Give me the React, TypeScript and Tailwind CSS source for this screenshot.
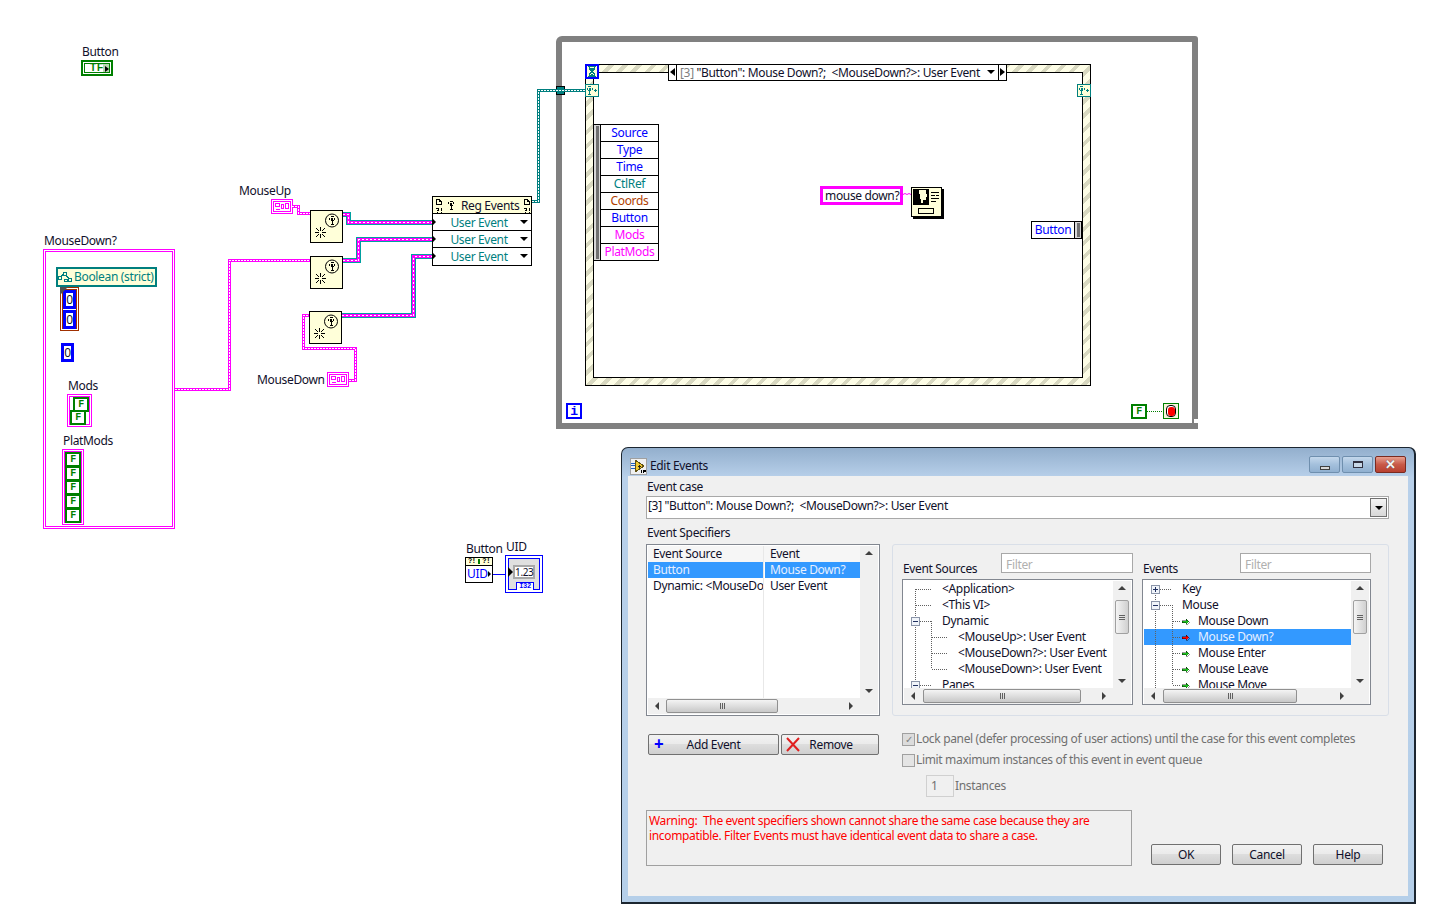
import React from "react";

const pos = (x: number, y: number, w?: number, h?: number): React.CSSProperties => ({ left: x, top: y, width: w, height: h });

function Lbl({ x, y, children }: { x: number; y: number; children: React.ReactNode }) {
  return <div className="absolute whitespace-nowrap leading-4 text-[#10102a]" style={pos(x, y)}>{children}</div>;
}

function FConst({ x, y }: { x: number; y: number }) {
  return (
    <div className="absolute flex items-center justify-center border-[2px] border-[#007f00] bg-white font-['Liberation_Mono'] text-[10px] font-bold leading-none text-[#007f00]" style={pos(x, y, 16, 15)}>F</div>
  );
}

function Num({ x, y, w, h }: { x: number; y: number; w: number; h: number }) {
  return <div className="absolute flex items-center justify-center border-[3px] border-[#0000ff] bg-white leading-none text-[#10102a]" style={pos(x, y, w, h)}>0</div>;
}

function Antenna({ x, y, c = "#000" }: { x: number; y: number; c?: string }) {
  return (
    <g transform={`translate(${x} ${y})`} fill="none" stroke={c} shapeRendering="crispEdges">
      <path d="M1.5 0.5h3M0.5 1.5v2M5.5 1.5v2M1.5 4.5h3M2.5 2.5h1v1h-1zM3 5v3M1.5 8.5h3" />
    </g>
  );
}

function RegNode({ x, y }: { x: number; y: number }) {
  return (
    <div className="absolute border border-black bg-[#ffffd9]" style={pos(x, y, 33, 33)}>
      <svg width="31" height="31" viewBox="0 0 31 31" className="block">
        <circle cx="21" cy="9.5" r="6.5" fill="none" stroke="#000" />
        <Antenna x={18} y={5} />
        <path d="M9.500 16v4M9.500 23v4M4 21.500h4M11 21.500h4M5 17l3 3M14 17l-3 3M5 26l3-3M14 26l-3-3" stroke="#000" fill="none" strokeWidth="1" shapeRendering="crispEdges" />
      </svg>
    </div>
  );
}

function Refnum({ x, y }: { x: number; y: number }) {
  return (
    <div className="absolute flex items-center justify-center border-[3px] border-double border-[#ff00ff] bg-white" style={pos(x, y, 22, 15)}>
      <svg width="14" height="7" viewBox="0 0 14 7" fill="none" stroke="#ff00ff" shapeRendering="crispEdges">
        <path d="M0.5 0.5h4v3h-4zM0.5 6.5h4M6.5 1.5h2v4h-2zM10.5 0.5h3v5h-3z" />
      </svg>
    </div>
  );
}

function DocMark({ x, y }: { x: number; y: number }) {
  return (
    <svg className="absolute" style={pos(x, y, 8, 15)} viewBox="0 0 8 15" fill="none" stroke="#000" shapeRendering="crispEdges">
      <path d="M1.5 1.5h3l2 2v3h-5zM4.5 1.5v2h2" />
      <path d="M0.5 10.5h3v2h-2M1.5 14.5h1M6.5 9.5v3M6.5 14v1" />
    </svg>
  );
}

function RegEvents() {
  return (
    <div className="absolute border border-black bg-white" style={pos(432, 196, 100, 70)}>
      <div className="relative h-[17px] border-b border-black bg-[#ffffd9]">
        <DocMark x={2} y={1} />
        <svg className="absolute" style={pos(14, 3, 8, 10)} viewBox="0 0 8 10"><Antenna x={1} y={0.5} /></svg>
        <div className="absolute left-[28px] top-0 leading-[17px] text-[#10102a]">Reg Events</div>
        <DocMark x={90} y={1} />
      </div>
      {[0, 1, 2].map((i) => (
        <div key={i} className="relative h-[17px] border-b border-black text-center leading-[18px] text-[#007f7f] last:border-b-0">
          <span className="absolute left-0 top-[5px] h-0 w-0 border-y-[3px] border-l-[3px] border-y-transparent border-l-black" />
          <span className="pr-[6px]">User Event</span>
          <span className="absolute right-[3px] top-[6px] h-0 w-0 border-x-[4px] border-t-[4px] border-x-transparent border-t-black" />
        </div>
      ))}
    </div>
  );
}

function Wires() {
  const ue = [
    "M342.5 214.5H348.5V222.5H432",
    "M342.5 260.5H358.5V239.5H432",
    "M341.5 315.5H413.5V256.5H432",
  ];
  const mg = [
    "M292 206.5H298.5V213.5H310",
    "M175 389.5H229.5V260.5H310",
    "M349 380.5H355.5V348.5H303.5V315.5H309",
  ];
  return (
    <svg className="absolute left-0 top-0" width="1442" height="916" fill="none" shapeRendering="crispEdges">
      {ue.map((d) => (
        <g key={d}>
          <path d={d} stroke="#00a0a0" strokeWidth="5" />
          <path d={d} stroke="#ff00ff" strokeWidth="3" />
          <path d={d} stroke="#fff" strokeWidth="1" strokeDasharray="2 2" />
        </g>
      ))}
      {mg.map((d) => (
        <g key={d}>
          <path d={d} stroke="#ff00ff" strokeWidth="3" />
          <path d={d} stroke="#fff" strokeWidth="1" strokeDasharray="2 1" />
        </g>
      ))}
      <path d="M532 201.5H538.5V90.5H585" stroke="#007f7f" strokeWidth="3" />
      <path d="M532 201.5H538.5V90.5H585" stroke="#fff" strokeWidth="1" strokeDasharray="2 1" />
      <path d="M493 574.5H506" stroke="#0000ff" strokeWidth="1" />
      <path d="M1147 411.5H1163" stroke="#007f00" strokeWidth="1" strokeDasharray="1 1" />
      <path d="M903 194.5l2 -1l2 1l2 -1l2 1" stroke="#ff00ff" strokeWidth="1" shapeRendering="auto" />
    </svg>
  );
}

function EvTerminal({ x, y }: { x: number; y: number }) {
  return (
    <div className="absolute border border-[#007f7f] bg-[#ffffd9]" style={pos(x, y, 14, 13)}>
      <svg width="12" height="11" viewBox="0 0 12 11" className="block" fill="none">
        <Antenna x={0.5} y={1} c="#007f7f" />
        <path d="M8 5.5h3M9.5 4v3" stroke="#007f7f" shapeRendering="crispEdges" />
      </svg>
    </div>
  );
}

function EventStructure() {
  const rows: [string, string][] = [
    ["Source", "text-[#0000ff]"],
    ["Type", "text-[#0000ff]"],
    ["Time", "text-[#0000ff]"],
    ["CtlRef", "text-[#007f7f]"],
    ["Coords", "text-[#b04000]"],
    ["Button", "text-[#0000ff]"],
    ["Mods", "text-[#ff00ff]"],
    ["PlatMods", "text-[#ff00ff]"],
  ];
  return (
    <>
      <div className="absolute rounded-tl-[6px] rounded-tr-[3px] border-[6px] border-[#808080] bg-white" style={pos(556, 36, 642, 393)} />
      <div className="absolute bg-white" style={pos(1194, 419, 4, 4)} />
      <div className="absolute border border-black bg-[repeating-linear-gradient(135deg,#fdfde6_0,#fdfde6_6px,#d8d8c0_6px,#d8d8c0_10px)]" style={pos(585, 64, 506, 322)}>
        <div className="absolute inset-[7px] border border-black bg-white" />
      </div>
      <div className="absolute bg-[#007f7f] border border-black" style={pos(556, 86, 9, 9)} />
      <div className="absolute flex items-center justify-center border-[2px] border-[#0000ff] bg-[#ffffd9]" style={pos(585, 64, 14, 15)}>
        <svg width="10" height="11" viewBox="0 0 10 11" fill="none" stroke="#007f7f" shapeRendering="crispEdges">
          <path d="M1 0.5h8M1 10.5h8M2.5 1v2l2 2v1l-2 2v2M7.5 1v2l-2 2v1l2 2v2" />
          <path d="M3 2h4M4 3h2M4 8h2M3 9h4" />
        </svg>
      </div>
      <EvTerminal x={585} y={84} />
      <EvTerminal x={1077} y={84} />

      <div className="absolute flex border border-black bg-white" style={pos(668, 64, 339, 17)}>
        <div className="relative w-[8px] shrink-0 border-r border-black">
          <span className="absolute left-[1px] top-[3px] h-0 w-0 border-y-[4px] border-r-[5px] border-y-transparent border-r-black" />
        </div>
        <div className="relative flex-1 whitespace-nowrap pl-[3px] leading-[15px] text-[#10102a]">
          <span className="text-[#808080]">[3]</span> "Button": Mouse Down?;&nbsp; &lt;MouseDown?&gt;: User Event
          <span className="absolute right-[3px] top-[5px] h-0 w-0 border-x-[4px] border-t-[4px] border-x-transparent border-t-black" />
        </div>
        <div className="relative w-[8px] shrink-0 border-l border-black">
          <span className="absolute left-[1px] top-[3px] h-0 w-0 border-y-[4px] border-l-[5px] border-y-transparent border-l-black" />
        </div>
      </div>

      <div className="absolute flex border border-black bg-white" style={pos(593, 124, 66, 137)}>
        <div className="w-[7px] shrink-0 border-r border-black bg-[#d8d8d8] px-[2px] py-[1px]"><div className="h-full w-[3px] bg-[#707070]" /></div>
        <div className="flex-1">
          {rows.map(([t, c]) => (
            <div key={t} className={`h-[17px] border-b border-black text-center leading-[16px] last:border-b-0 ${c}`}>{t}</div>
          ))}
        </div>
      </div>

      <div className="absolute flex border border-black bg-white" style={pos(1031, 221, 51, 18)}>
        <div className="flex-1 text-center leading-[16px] text-[#0000ff]">Button</div>
        <div className="w-[7px] shrink-0 border-l border-black bg-[#d8d8d8] px-[2px] py-[1px]"><div className="h-full w-[3px] bg-[#707070]" /></div>
      </div>

      <div className="absolute whitespace-nowrap border-[3px] border-[#ff00ff] bg-white px-[2px] leading-[13px] text-[#10102a]" style={pos(820, 186, 83, 19)}>mouse down?</div>

      <div className="absolute border border-black bg-[#ffffd9] shadow-[2px_2px_0_#000]" style={pos(911, 187, 31, 30)}>
        <svg width="29" height="28" viewBox="0 0 29 28" className="block" fill="none" shapeRendering="crispEdges">
          <rect x="1" y="1" width="16" height="16" fill="#000" />
          <path d="M7 2h7v4h1v3h-1v3h-3v3h-2v-3l-1-2z" fill="#ffffd9" />
          <path d="M3 3h2v7h2l-3 4-3-4h2z" fill="#000" />
          <path d="M19 4.5h8M19 7.5h4M24 7.5h3M19 10.5h8M19 13.5h5" stroke="#000" />
          <rect x="6.5" y="20.5" width="15" height="5" stroke="#000" />
        </svg>
      </div>

      <div className="absolute flex items-center justify-center border-[2px] border-[#0000ff] bg-white font-['Liberation_Mono'] text-[13px] font-bold leading-none text-[#0000ff]" style={pos(566, 403, 16, 16)}>i</div>
      <FConst x={1131} y={404} />
      <div className="absolute flex items-center justify-center border border-[#007f00] bg-[#f6f6dc]" style={pos(1163, 403, 16, 16)}>
        <div className="flex h-[12px] w-[10px] items-center justify-center rounded-[4px] border border-black bg-white">
          <div className="h-[9px] w-[7px] rounded-[3px] bg-[#ff0000]" />
        </div>
      </div>
    </>
  );
}

function Diagram() {
  return (
    <>
      <Lbl x={82} y={44}>Button</Lbl>
      <div className="absolute border-[2px] border-[#007f00] bg-white p-[1px]" style={pos(81, 60, 32, 16)}>
        <div className="relative flex h-full items-center border border-[#007f00] bg-[linear-gradient(90deg,#fff_76%,#b8d8b0_76%)] pl-[5px] font-['Liberation_Sans'] text-[10px] font-bold leading-none tracking-[1px] text-[#007f00]">
          TF
          <span className="absolute right-0 top-[2px] h-0 w-0 border-y-[3px] border-l-[4px] border-y-transparent border-l-black" />
        </div>
      </div>

      <Lbl x={44} y={233}>MouseDown?</Lbl>
      <div className="absolute border-[3px] border-double border-[#ff00ff] bg-white" style={pos(43, 249, 132, 280)} />
      <div className="absolute flex items-center gap-[2px] border-[2px] border-[#007f7f] bg-[#ffffd9] leading-none text-[#007f7f]" style={pos(56, 267, 101, 20)}>
        <svg width="14" height="12" viewBox="0 0 14 12" fill="none" stroke="#007f7f" shapeRendering="crispEdges">
          <path d="M0.5 5.5h3v3h-3zM5.5 1.5h3v3h-3zM10.5 7.5h3v3h-3zM6.5 8.5h3v2h-3zM3 5l3-2M8 4l3 4" />
        </svg>
        <span className="whitespace-nowrap">Boolean (strict)</span>
      </div>
      <div className="absolute border-[3px] border-double border-[#a03000] bg-white" style={pos(60, 287, 19, 44)} />
      <Num x={63} y={290} w={13} h={19} />
      <Num x={63} y={310} w={13} h={19} />
      <div className="absolute h-0 w-0 border-r-[8px] border-t-[8px] border-r-transparent border-t-[#505050]" style={pos(60, 287)} />
      <Num x={61} y={343} w={13} h={19} />

      <Lbl x={68} y={378}>Mods</Lbl>
      <div className="absolute border-[3px] border-double border-[#ff00ff] bg-white" style={pos(67, 394, 25, 33)} />
      <FConst x={73} y={397} />
      <FConst x={70} y={410} />

      <Lbl x={63} y={433}>PlatMods</Lbl>
      <div className="absolute border-[3px] border-double border-[#ff00ff] bg-white" style={pos(62, 449, 22, 76)} />
      {[452, 466, 480, 494, 508].map((y) => <FConst key={y} x={65} y={y} />)}

      <Lbl x={239} y={183}>MouseUp</Lbl>
      <Refnum x={271} y={199} />
      <Lbl x={257} y={372}>MouseDown</Lbl>
      <Refnum x={327} y={372} />

      <Wires />
      <RegNode x={310} y={210} />
      <RegNode x={310} y={256} />
      <RegNode x={309} y={311} />
      <RegEvents />

      <Lbl x={466} y={541}>Button</Lbl>
      <Lbl x={506} y={539}>UID</Lbl>
      <div className="absolute border border-black bg-white" style={pos(465, 557, 28, 26)}>
        <div className="flex h-[8px] items-center justify-between border-b border-black bg-[#ffffd9] px-[2px] font-['Liberation_Mono'] text-[7px] font-bold leading-none">
          <span>?!</span><span className="h-[5px] w-[2px] bg-[#007f00]" /><span>?!</span>
        </div>
        <div className="relative pl-[1px] leading-[16px] text-[#0000ff]">
          UID
          <span className="absolute right-[1px] top-[5px] h-0 w-0 border-y-[3px] border-l-[3px] border-y-transparent border-l-black" />
        </div>
      </div>
      <div className="absolute border border-[#0000ff] bg-white p-[2px]" style={pos(505, 555, 38, 38)}>
        <div className="relative flex h-full justify-center border border-[#0000ff] bg-[#e0e0e0] pt-[6px]">
          <div className="h-[14px] w-[22px] border-[2px] border-[#a8a8a8] bg-white text-center text-[10px] leading-[10px] text-[#10102a]">1.23</div>
          <div className="absolute -bottom-px left-[7px] h-[8px] w-[18px] border border-b-0 border-[#0000ff] bg-white text-center font-['Liberation_Mono'] text-[7px] font-bold leading-[7px] text-[#0000ff]">I32</div>
          <span className="absolute -left-px top-[8px] h-0 w-0 border-y-[5px] border-l-[5px] border-y-transparent border-l-black" />
        </div>
      </div>
    </>
  );
}

function Arrow({ d }: { d: "u" | "d" | "l" | "r" }) {
  const cls = {
    u: "border-x-[4px] border-b-[4px] border-x-transparent border-b-[#404040]",
    d: "border-x-[4px] border-t-[4px] border-x-transparent border-t-[#404040]",
    l: "border-y-[4px] border-r-[4px] border-y-transparent border-r-[#404040]",
    r: "border-y-[4px] border-l-[4px] border-y-transparent border-l-[#404040]",
  }[d];
  return <span className={`h-0 w-0 ${cls}`} />;
}

function VBar({ thumb }: { thumb?: boolean }) {
  return (
    <div className="relative flex w-full flex-col items-center justify-between bg-[#f0f0f0] py-[5px]">
      <Arrow d="u" />
      {thumb && (
        <div className="absolute left-[2px] top-[19px] flex h-[34px] w-[14px] flex-col items-center justify-center gap-[1px] rounded-[2px] border border-[#a0a0a0] bg-[linear-gradient(90deg,#f4f4f4,#d0d0d0)]">
          <span className="h-px w-[6px] bg-[#606060]" /><span className="h-px w-[6px] bg-[#606060]" /><span className="h-px w-[6px] bg-[#606060]" />
        </div>
      )}
      <Arrow d="d" />
    </div>
  );
}

function HBar({ left, width }: { left: number; width: number }) {
  return (
    <div className="relative flex h-[16px] items-center justify-between bg-[#f0f0f0] px-[7px]">
      <Arrow d="l" />
      <div className="absolute top-[1px] flex h-[14px] items-center justify-center gap-[1px] rounded-[2px] border border-[#909090] bg-[linear-gradient(#f4f4f4,#c8c8c8)]" style={{ left, width }}>
        <span className="h-[6px] w-px bg-[#606060]" /><span className="h-[6px] w-px bg-[#606060]" /><span className="h-[6px] w-px bg-[#606060]" />
      </div>
      <Arrow d="r" />
    </div>
  );
}

function WinBtn({ kind }: { kind: "min" | "max" | "close" }) {
  const base = "flex h-[17px] items-center justify-center rounded-[2px] border";
  if (kind === "close")
    return (
      <div className={`${base} w-[31px] border-[#7a2a20] bg-[linear-gradient(#e8a090,#c85a48_50%,#b84030)]`}>
        <span className="text-[13px] font-bold leading-none text-[#f4f4f4] [text-shadow:0_0_1px_#404040]">✕</span>
      </div>
    );
  return (
    <div className={`${base} w-[31px] border-[#6f8fae] bg-[linear-gradient(#c4d8ec,#a4c0dc_50%,#90b0d0)]`}>
      {kind === "min" ? <span className="mt-[6px] h-[4px] w-[10px] border border-[#404040] bg-[#d8d8d8]" /> : <span className="flex h-[7px] w-[10px] border border-[#303040] border-t-2 bg-[#c8d8e8]" />}
    </div>
  );
}

function Btn({ w, children }: { w: number; children: React.ReactNode }) {
  return (
    <div className="relative flex h-[21px] shrink-0 items-center justify-center rounded-[2px] border border-[#707070] bg-[linear-gradient(#f2f2f2,#ebebeb_45%,#dddddd_50%,#cfcfcf)] text-[#10102a]" style={{ width: w }}>
      {children}
    </div>
  );
}

function TreeRow({ pad, text, sel }: { pad: number; text: string; sel?: boolean }) {
  return (
    <div className={`h-[16px] whitespace-nowrap leading-[16px] ${sel ? "bg-[#3399ff] text-[#e8f0ff]" : "text-[#10102a]"}`} style={{ paddingLeft: pad }}>{text}</div>
  );
}

function Box({ y, x, plus }: { x: number; y: number; plus?: boolean }) {
  return (
    <g>
      <rect x={x + 0.5} y={y + 0.5} width="8" height="8" fill="#f0f4fa" stroke="#8a94a8" />
      <path d={`M${x + 2} ${y + 4.5}h5`} stroke="#203060" />
      {plus && <path d={`M${x + 4.5} ${y + 2}v5`} stroke="#203060" />}
    </g>
  );
}

function SourceTree() {
  const p = "#606060";
  return (
    <div className="relative h-full overflow-hidden">
      <TreeRow pad={38} text="<Application>" />
      <TreeRow pad={38} text="<This VI>" />
      <TreeRow pad={38} text="Dynamic" />
      <TreeRow pad={54} text="<MouseUp>: User Event" />
      <TreeRow pad={54} text="<MouseDown?>: User Event" />
      <TreeRow pad={54} text="<MouseDown>: User Event" />
      <TreeRow pad={38} text="Panes" />
      <svg className="absolute left-0 top-0" width="60" height="112" fill="none" shapeRendering="crispEdges">
        <path d="M11.5 8V108M12 8.5H28M12 24.5H28M16 40.5H28M27.5 40V88M28 56.5H44M28 72.5H44M28 88.5H44M16 104.5H28" stroke={p} strokeDasharray="1 1" />
        <Box x={7} y={36} />
        <Box x={7} y={100} />
      </svg>
    </div>
  );
}

function EventTree() {
  const p = "#606060";
  const ar = [40, 56, 72, 88, 104];
  return (
    <div className="relative h-full overflow-hidden">
      <TreeRow pad={38} text="Key" />
      <TreeRow pad={38} text="Mouse" />
      <TreeRow pad={54} text="Mouse Down" />
      <TreeRow pad={54} text="Mouse Down?" sel />
      <TreeRow pad={54} text="Mouse Enter" />
      <TreeRow pad={54} text="Mouse Leave" />
      <TreeRow pad={54} text="Mouse Move" />
      <svg className="absolute left-0 top-0" width="50" height="112" fill="none" shapeRendering="crispEdges">
        <path d="M11.5 8V110M16 8.5H28M16 24.5H28M28.5 24V104" stroke={p} strokeDasharray="1 1" />
        {ar.map((y, i) => (
          <g key={y}>
            <path d={`M29 ${y + 0.5}H36`} stroke={p} strokeDasharray="1 1" />
            <path d={`M38 ${y - 0.5}h4v-2l3 3l-3 3v-2h-4z`} fill={i === 1 ? "#ff0000" : "#20c020"} stroke="#000" strokeWidth="0.4" />
          </g>
        ))}
        <Box x={7} y={4} plus />
        <Box x={7} y={20} />
      </svg>
    </div>
  );
}

function TreeList({ thumbLeft, thumbW, children }: { thumbLeft: number; thumbW: number; children: React.ReactNode }) {
  return (
    <div className="grid h-[126px] grid-cols-[1fr_18px] grid-rows-[107px_16px] border border-[#828790] bg-white p-px">
      <div className="min-w-0 overflow-hidden">{children}</div>
      <VBar thumb />
      <HBar left={thumbLeft} width={thumbW} />
      <div className="bg-[#f0f0f0]" />
    </div>
  );
}

function Filter() {
  return <div className="h-[20px] border border-[#a8a8a8] bg-white pl-[4px] leading-[21px] text-[#b0b0b0]">Filter</div>;
}

function TitleIcon() {
  return (
    <svg width="17" height="17" viewBox="0 0 17 17" shapeRendering="crispEdges" className="shrink-0">
      <rect x="0.5" y="0.5" width="16" height="16" fill="#f0f0f0" stroke="#a0a0a0" />
      <path d="M5 2l9 6-9 6z" fill="#f0c830" stroke="#605010" />
      <path d="M1 5h4M1 7h4M1 10h4" stroke="#2060c0" />
      <path d="M8 8h3M9.500 6.500v3" stroke="#202020" />
      <rect x="10" y="11" width="6" height="5" fill="#f0f0f0" />
      <path d="M11 12v3M13 12h2v1h-2v2" stroke="#000" />
    </svg>
  );
}

function Dialog() {
  return (
    <div className="absolute flex flex-col rounded-t-[7px] border border-b-2 border-r-2 border-[#1c2630] bg-[linear-gradient(#93afcd,#b8d0ea_6.5%,#b5cfe9)] pb-[6px] pl-[6px] pr-[6px]" style={pos(621, 447, 795, 457)}>
      <div className="flex h-[28px] shrink-0 items-start">
        <div className="ml-[2px] mt-[9px] flex items-center gap-[3px] text-[#10102a]">
          <TitleIcon />
          <span>Edit Events</span>
        </div>
        <div className="ml-auto mr-[2px] mt-[8px] flex gap-[2px]">
          <WinBtn kind="min" /><WinBtn kind="max" /><WinBtn kind="close" />
        </div>
      </div>
      <div className="min-h-0 flex-1 bg-[#f0f0f0] pl-[18px] pr-[19px] pt-[3px] text-[#10102a]">
        <div className="h-[16px] pl-px leading-[16px]">Event case</div>
        <div className="mt-px flex h-[23px] items-center justify-between border border-[#a8a8a8] bg-white pl-px pr-[1px]">
          <span className="mb-[3px] whitespace-nowrap">[3] "Button": Mouse Down?;&nbsp; &lt;MouseDown?&gt;: User Event</span>
          <div className="flex h-[19px] w-[17px] items-center justify-center border border-[#707070] bg-[linear-gradient(#f4f4f4,#d8d8d8)]">
            <span className="h-0 w-0 border-x-[4px] border-t-[4px] border-x-transparent border-t-black" />
          </div>
        </div>
        <div className="mt-[6px] h-[16px] pl-px leading-[16px]">Event Specifiers</div>
        <div className="mt-[3px] flex h-[172px] gap-[12px]">
          <div className="grid w-[234px] shrink-0 grid-cols-[1fr_18px] grid-rows-[152px_16px] border border-[#828790] bg-white p-px">
            <div className="min-w-0 overflow-hidden">
              <div className="grid h-[16px] grid-cols-[116px_1fr] bg-[#f6f6f6] leading-[16px]">
                <div className="border-r border-[#e8e8e8] pl-[5px]">Event Source</div>
                <div className="pl-[6px]">Event</div>
              </div>
              <div className="grid h-full grid-cols-[116px_1fr]">
                <div className="border-r border-[#e8e8e8]">
                  <div className="h-[16px] bg-[#3399ff] pl-[5px] leading-[16px] text-[#e8f0ff]">Button</div>
                  <div className="h-[16px] overflow-hidden whitespace-nowrap pl-[5px] leading-[16px]">Dynamic: &lt;MouseDown?&gt;</div>
                </div>
                <div>
                  <div className="h-[16px] border-l border-white bg-[#3399ff] pl-[5px] leading-[16px] text-[#e8f0ff]">Mouse Down?</div>
                  <div className="h-[16px] pl-[6px] leading-[16px]">User Event</div>
                </div>
              </div>
            </div>
            <VBar />
            <HBar left={18} width={112} />
            <div className="bg-[#f0f0f0]" />
          </div>
          <div className="flex-1 rounded-[3px] border border-[#d9dfe8] px-[9px] pt-[8px]">
            <div className="flex gap-[9px]">
              <div className="w-[231px] shrink-0">
                <div className="flex h-[26px]">
                  <span className="mt-[8px] pl-px leading-[16px]">Event Sources</span>
                  <div className="ml-auto w-[132px]"><Filter /></div>
                </div>
                <TreeList thumbLeft={19} thumbW={158}><SourceTree /></TreeList>
              </div>
              <div className="w-[229px] shrink-0">
                <div className="flex h-[26px]">
                  <span className="mt-[8px] pl-px leading-[16px]">Events</span>
                  <div className="ml-auto w-[131px]"><Filter /></div>
                </div>
                <TreeList thumbLeft={19} thumbW={134}><EventTree /></TreeList>
              </div>
            </div>
          </div>
        </div>
        <div className="mt-[15px] flex">
          <div className="flex w-[256px] shrink-0 gap-[2px] pl-[2px] pt-[3px]">
            <Btn w={131}>
              <span className="absolute left-[5px] top-[-3px] text-[17px] font-bold leading-[24px] text-[#0000ff]">+</span>
              Add Event
            </Btn>
            <Btn w={98}>
              <svg className="absolute left-[4px] top-[2px]" width="14" height="15" viewBox="0 0 14 15"><path d="M1 1l12 13M13 1L1 14" stroke="#e02020" strokeWidth="2" fill="none" /></svg>
              <span className="pl-[2px]">Remove</span>
            </Btn>
          </div>
          <div className="text-[#707070]">
            <div className="flex h-[16px] items-center gap-[1px] leading-[16px]">
              <span className="flex h-[13px] w-[13px] items-center justify-center border border-[#a0a0a0] bg-[#dcdcdc] text-[10px] leading-none text-[#808080]">✓</span>
              <span className="whitespace-nowrap">Lock panel (defer processing of user actions) until the case for this event completes</span>
            </div>
            <div className="mt-[5px] flex h-[16px] items-center gap-[1px] leading-[16px]">
              <span className="h-[13px] w-[13px] border border-[#a0a0a0] bg-[#e4e4e4]" />
              <span className="whitespace-nowrap">Limit maximum instances of this event in event queue</span>
            </div>
            <div className="mt-[7px] flex h-[22px] items-center pl-[24px]">
              <span className="h-[22px] w-[28px] border border-[#d0d0d0] bg-[#f0f0f0] pl-[4px] leading-[20px]">1</span>
              <span className="pl-px">Instances</span>
            </div>
          </div>
        </div>
        <div className="mt-[13px] flex">
          <div className="h-[56px] w-[486px] shrink-0 border border-[#a0a0a0] pl-[2px] pt-[2px] leading-[15px] text-[#ff0000]">
            Warning:&nbsp; The event specifiers shown cannot share the same case because they are<br />
            incompatible. Filter Events must have identical event data to share a case.
          </div>
          <div className="ml-[19px] mt-[34px] flex gap-[11px]">
            <Btn w={70}>OK</Btn>
            <Btn w={70}>Cancel</Btn>
            <Btn w={70}>Help</Btn>
          </div>
        </div>
      </div>
    </div>
  );
}

export default function App() {
  return (
    <div className="relative h-[916px] w-[1442px] overflow-hidden bg-white font-['Noto_Sans',sans-serif] text-[12px] tracking-[-0.34px]">
      <EventStructure />
      <Diagram />
      <Dialog />
    </div>
  );
}
